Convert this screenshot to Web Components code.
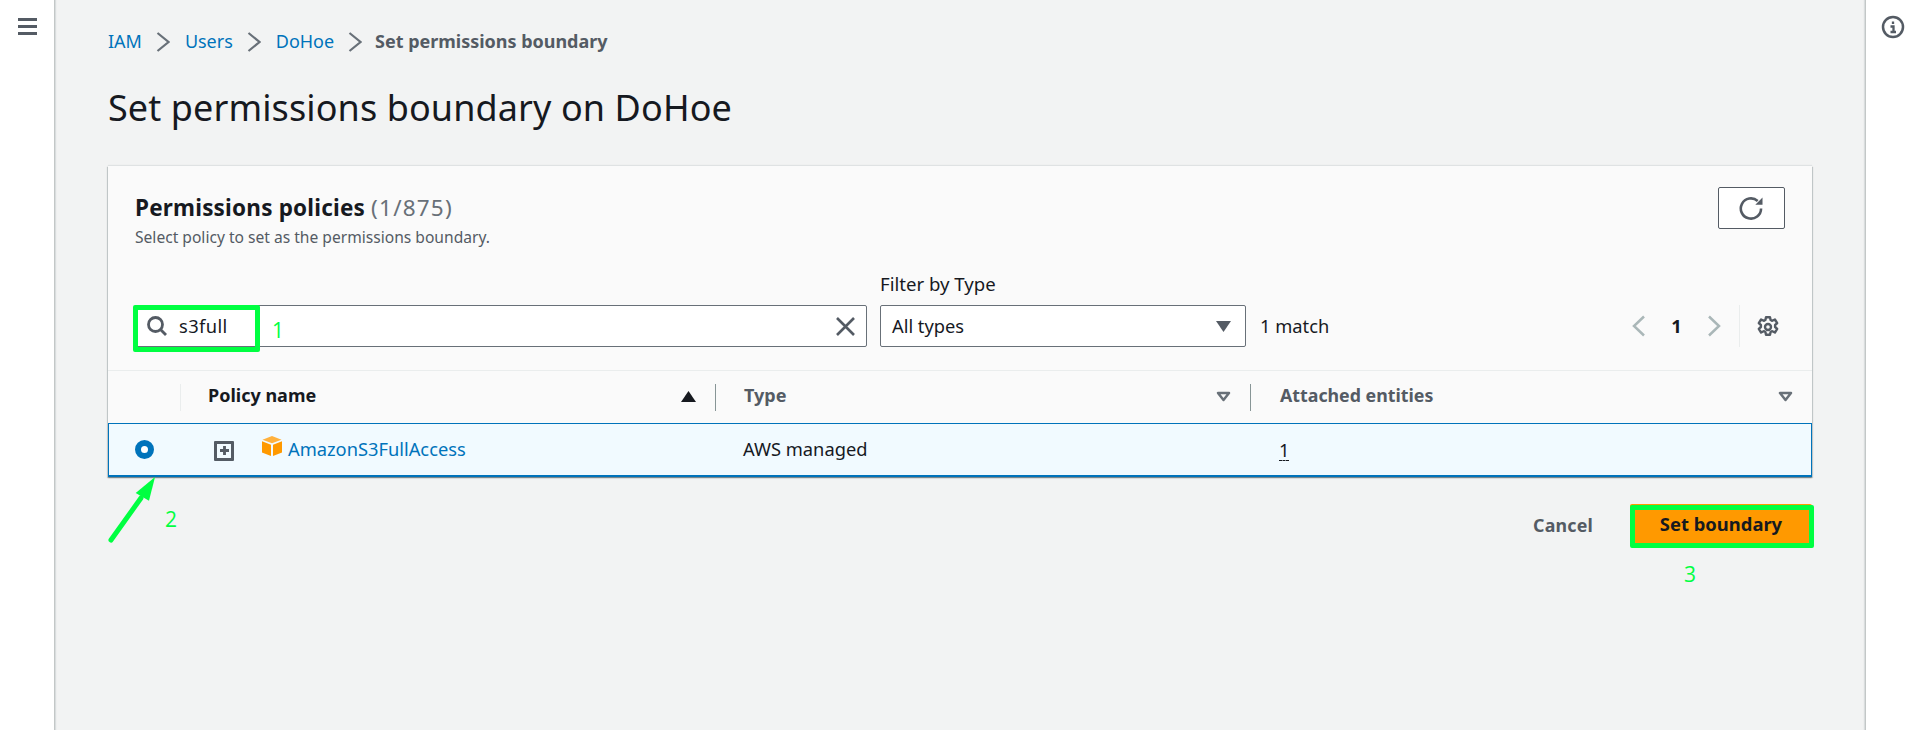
<!DOCTYPE html>
<html lang="en"><head><meta charset="utf-8"><title>Set permissions boundary</title>
<style>
html,body{margin:0;padding:0;height:100%;overflow:hidden}
body{font:18.3px/22px "Noto Sans","Open Sans",sans-serif;color:#16191f;background:#f2f3f3}
</style></head><body>
<app-shell>
  <menu-rail slot="nav"></menu-rail>
  <crumb-trail></crumb-trail>
  <page-title>Set permissions boundary on DoHoe</page-title>
  <policy-card></policy-card>
  <form-actions></form-actions>
  <info-rail slot="tools"></info-rail>
</app-shell>
<script>
const def=(name,html)=>customElements.define(name,class extends HTMLElement{
  constructor(){super();this.attachShadow({mode:'open'}).innerHTML=html;}
});
def('app-shell',`<style>
:host{display:grid;grid-template-columns:55px 1fr 54px;height:730px;position:relative}
.nav,.tools{background:#fff;display:block}
.nav{border-right:1px solid #c3c7c7;box-sizing:border-box;box-shadow:1px 0 1px rgba(0,28,36,.1)}
.tools{border-left:1px solid #c3c7c7;box-shadow:-1px 0 1px rgba(0,28,36,.1)}
main{padding:31px 53px 0 53px;min-width:0}
</style>
<div class="nav"><slot name="nav"></slot></div>
<main><slot></slot></main>
<div class="tools"><slot name="tools"></slot></div>`);
def('menu-rail',`<style>:host{display:block;padding:18px 0 0 18px}
svg{display:block}</style>
<svg width="19" height="17" viewBox="0 0 19 17" fill="#545b64"><rect width="19" height="3"/><rect y="7" width="19" height="3"/><rect y="14" width="19" height="3"/></svg>`);
def('info-rail',`<style>:host{display:block;padding:15px 0 0 15px}svg{display:block}</style>
<svg width="24" height="24" viewBox="0 0 24 24" fill="none" stroke="#545b64"><circle cx="12" cy="12" r="10" stroke-width="2.5"/><path d="M12 6.5v2.5M9.5 11.5H12.5V17M9.5 17h5.5" stroke-width="2.3"/></svg>`);
const crumbChevron=`<svg width="14" height="20" viewBox="0 0 14 20" fill="none" stroke="#687078" stroke-width="2.2"><path d="M1.5 1l11 9-11 9"/></svg>`;
def('crumb-trail',`<style>:host{display:flex;align-items:center;height:22px;font-size:18px;letter-spacing:-.02px}
a{color:#0073bb;text-decoration:none}svg{display:block;flex:none}
.sep{display:flex;justify-content:center}
a,b{position:relative;top:-1px}
b{color:#545b64;font-weight:700}
</style>
<a href="#">IAM</a><span class="sep" style="width:43px">${crumbChevron}</span>
<a href="#">Users</a><span class="sep" style="width:43px">${crumbChevron}</span>
<a href="#">DoHoe</a><span class="sep" style="width:41px">${crumbChevron}</span>
<b>Set permissions boundary</b>`);
def('page-title',`<style>:host{display:block;margin-top:33px;font-size:36px;letter-spacing:.1px;line-height:44px;font-weight:400;color:#16191f}</style><slot></slot>`);
const tri=`<svg width="15" height="11" viewBox="0 0 15 11" fill="none" stroke="#687078" stroke-width="2.5" stroke-linejoin="round"><path d="M2 2h11L7.5 9z"/></svg>`;
def('policy-card',`<style>
:host{display:block;margin-top:36px;background:#fafafa;box-shadow:0 1px 1px rgba(0,28,36,.3),1px 1px 1px rgba(0,28,36,.15),-1px 1px 1px rgba(0,28,36,.15),0 -1px 1px rgba(0,28,36,.08)}
header{padding:21px 27px 23px 27px;border-bottom:1px solid #eaeded}
.top{display:flex;justify-content:space-between}
.titles{padding-top:7px}
h2{margin:0;font-size:22.5px;letter-spacing:.2px;line-height:26px;font-weight:700;position:relative;top:1px}
h2 span{font-weight:400;color:#687078;letter-spacing:1.2px}
p{margin:7px 0 1px;font-size:15.6px;line-height:20px;color:#545b64}
.refresh{box-sizing:border-box;width:67px;height:42px;background:#fff;border:1px solid #545b64;border-radius:2px;display:flex;align-items:center;justify-content:center;padding:0}
.tools{display:flex;align-items:flex-end;margin-top:26px}
.search{position:relative;box-sizing:border-box;width:732px;height:42px;background:#fff;border:1px solid #687078;border-radius:2px;display:flex;align-items:center;padding:0 11px 0 11px;flex:none}
.search .val{margin-left:12px;flex:1;color:#16191f;letter-spacing:.4px}
.mark{position:absolute;left:-3px;top:-1px;width:127px;height:47px;box-sizing:border-box;border:5px solid #00ff41;border-radius:2px}
.num{position:absolute;color:#00ff41;font:400 21px/24px "Open Sans",sans-serif}
.field{margin-left:13px;width:366px;flex:none}
.field label{display:block;margin-bottom:9px;color:#16191f;font-size:18.6px;line-height:20px;padding-bottom:2px}
.select{box-sizing:border-box;height:42px;background:#fff;border:1px solid #687078;border-radius:2px;display:flex;align-items:center;justify-content:space-between;padding:0 14px 0 11px}
.count{margin-left:14px;line-height:42px;flex:1;color:#16191f}
.pager{display:flex;align-items:center;height:42px;padding-right:6px}
.pg{width:38px;display:flex;justify-content:center;font-weight:700}
.pg.n{width:37px}
.pdiv{width:1px;height:42px;background:#eaeded;margin-left:6px;margin-right:17px}
.pager svg.gear{position:relative;top:1px}
.thead,.trow{display:grid;grid-template-columns:72px 535px 535px 1fr}
.thead{height:52px;align-items:center;font-weight:700;font-size:18px}
.th{display:flex;align-items:center;justify-content:space-between;height:27px;border-left:1px solid #d5dbdb;padding:0 19px 0 27px;box-sizing:border-box}
.th span{position:relative;top:-2px}
.th svg{position:relative;top:-1px}
.th.first{border-color:#eaeded;color:#16191f}
.th.g{color:#545b64;border-color:#879596;padding-left:28px}
.th.a{color:#545b64;border-color:#879596;font-size:17.8px;padding-left:29px}
svg{display:block;flex:none}
.trow{box-sizing:border-box;height:54px;background:#f1faff;border:1px solid #0073bb;border-bottom-width:2px;align-items:center;grid-template-columns:71px 535px 535px 1fr}
.radio{box-sizing:border-box;width:19px;height:19px;border-radius:50%;border:6px solid #0073bb;background:#fff;margin-left:26px}
.name{display:flex;align-items:center;padding-left:34px;position:relative}
.exp{box-sizing:border-box;width:20px;height:20px;border:3px solid #545b64;border-radius:1px;display:flex;align-items:center;justify-content:center;margin-top:2px}
.name svg.cube{margin-left:28px;margin-right:6px;margin-top:-8px}
a{color:#0073bb;text-decoration:none}
.name a,.t{position:relative;top:-1px}
.t{padding-left:28px}
.e{padding-left:29px}
.e span{border-bottom:1px dashed #16191f;display:inline-block;line-height:20px}
</style>
<header>
  <div class="top">
    <div class="titles"><h2>Permissions policies <span>(1/875)</span></h2><p>Select policy to set as the permissions boundary.</p></div>
    <button class="refresh" aria-label="Refresh"><svg width="27" height="27" viewBox="0 0 24 24" fill="none" stroke="#545b64" stroke-width="2.3"><path d="M20.5 12a9 9 0 1 1-3-6.7"/><path d="M21.8 2.2V8.6H15.4z" fill="#545b64" stroke="none"/></svg></button>
  </div>
  <div class="tools">
    <div class="search">
      <svg width="20" height="20" viewBox="0 0 20 20" fill="none" stroke="#545b64" stroke-width="2.8"><circle cx="8.5" cy="8.5" r="7"/><path d="M13.5 13.5l5.5 5.5"/></svg>
      <span class="val">s3full</span>
      <svg width="19" height="19" viewBox="0 0 19 19" fill="none" stroke="#545b64" stroke-width="2.6"><path d="M1 1l17 17M18 1L1 18"/></svg>
      <span class="mark"></span>
      <span class="num" style="left:136px;top:12px">1</span>
    </div>
    <div class="field"><label>Filter by Type</label>
      <div class="select"><span>All types</span><svg width="15" height="11" viewBox="0 0 15 11" fill="#545b64"><path d="M0 0h15L7.5 11z"/></svg></div>
    </div>
    <div class="count">1 match</div>
    <div class="pager">
      <span class="pg"><svg width="14" height="22" viewBox="0 0 14 22" fill="none" stroke="#aab7b8" stroke-width="2.5"><path d="M12 1.5L2 11l10 9.5"/></svg></span>
      <span class="pg n">1</span>
      <span class="pg"><svg width="14" height="22" viewBox="0 0 14 22" fill="none" stroke="#aab7b8" stroke-width="2.5"><path d="M2 1.5L12 11 2 20.5"/></svg></span>
      <span class="pdiv"></span>
      <svg class="gear" width="22" height="22" viewBox="0 0 22 22" fill="none" stroke="#545b64" stroke-width="2.4" stroke-linejoin="round"><circle cx="11" cy="11" r="3"/><path d="M9 1.2h4l.6 2.8 1.7.8 2.6-1.3 2.3 3.6-2.1 1.9v2l2.1 1.9-2.3 3.6-2.6-1.3-1.7.8-.6 2.8H9l-.6-2.8-1.7-.8-2.6 1.3-2.3-3.6 2.1-1.9v-2L1.8 7.1l2.3-3.6 2.6 1.3 1.7-.8z"/></svg>
    </div>
  </div>
</header>
<div class="thead">
  <div></div>
  <div class="th first"><span>Policy name</span><svg width="15" height="11" viewBox="0 0 15 11" fill="#16191f"><path d="M7.5 0L15 11H0z"/></svg></div>
  <div class="th g"><span>Type</span>${tri}</div>
  <div class="th a"><span>Attached entities</span>${tri}</div>
</div>
<div class="trow">
  <div><div class="radio"></div></div>
  <div class="name"><span class="exp"><svg width="9" height="9" viewBox="0 0 10 10" fill="#545b64"><path d="M3.4 0h3.2v3.4H10v3.2H6.6V10H3.4V6.6H0V3.4h3.4z"/></svg></span>
    <svg class="cube" width="20" height="20" viewBox="0 0 20 20"><path d="M10 0l9.5 3.7L10 7.2.5 3.7z" fill="#ffb13d"/><path d="M0 5.3l9 3.4V20L0 16.4z" fill="#ff9900"/><path d="M20 5.3l-9 3.4V20l9-3.6z" fill="#ff9900"/></svg>
    <a href="#">AmazonS3FullAccess</a></div>
  <div class="t">AWS managed</div>
  <div class="e"><span>1</span></div>
</div>`);
def('form-actions',`<style>
:host{display:flex;justify-content:flex-end;align-items:flex-start;margin-top:27px;position:relative;height:44px}
.cancel{font-weight:700;color:#545b64;margin-right:37px;font-size:17.8px;letter-spacing:.2px;line-height:42px}
.primary{position:relative;box-sizing:border-box;width:182px;height:42px;background:#f90;border-radius:2px;font-weight:700;font-size:18.4px;color:#16191f;display:flex;align-items:center;justify-content:center}
.mark{position:absolute;left:0;top:1px;width:184px;height:43px;box-sizing:border-box;border:5px solid #00ff41;border-radius:2px}
.label{position:relative;z-index:1;top:-1px}
.num{position:absolute;left:54px;top:58px;color:#00ff41;font:400 21px/24px "Open Sans",sans-serif}
.num.two{left:-1465px;top:3px}
svg{position:absolute;left:0;top:-29px;width:60px;height:80px}
</style>
<span class="cancel">Cancel</span>
<span class="primary"><span class="mark"></span><span class="label">Set boundary</span><span class="num">3</span><span class="num two">2</span></span>
<svg viewBox="0 0 60 80" fill="#00ff41"><path d="M3 65L33 23" stroke="#00ff41" stroke-width="5" stroke-linecap="round" fill="none"/><path d="M47 2L27.7 18 41 25.7z"/></svg>`);
</script>
</body></html>
